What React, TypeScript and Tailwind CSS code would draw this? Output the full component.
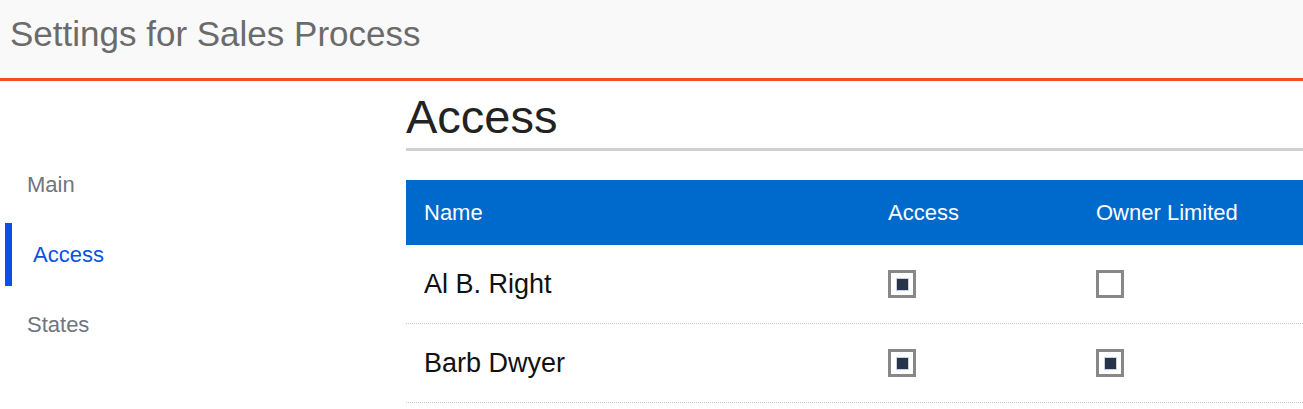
const nav = [
  { label: "Main", active: false },
  { label: "Access", active: true },
  { label: "States", active: false },
];

const users = [
  { name: "Al B. Right", access: true, ownerLimited: false },
  { name: "Barb Dwyer", access: true, ownerLimited: true },
];

function Check({ checked }: { checked: boolean }) {
  return (
    <div className="flex h-[28px] w-[28px] items-center justify-center border-[3px] border-[#888888] bg-white">
      {checked && (
        <div className="h-[13px] w-[13px] border border-[#c9d1dc] bg-[#28344a]" />
      )}
    </div>
  );
}

export default function App() {
  return (
    <div className="min-h-[409px] bg-white font-['Liberation_Sans',Arial,sans-serif]">
      <header className="flex h-[81px] items-center border-b-[3px] border-[#f04e26] bg-[#f9f9f9] px-[10px] pb-[12px]">
        <h1 className="text-[35px] leading-none text-[#6b6b6b]">
          Settings for Sales Process
        </h1>
      </header>
      <div className="flex">
        <aside className="w-[406px] shrink-0 pl-[5px] pt-[72px]">
          <nav className="flex flex-col gap-[7px]">
            {nav.map(({ label, active }) => (
              <div
                key={label}
                className={
                  active
                    ? "flex h-[63px] items-center border-l-[7px] border-[#0a50e6] pl-[21px] text-[22px] text-[#0a50e6]"
                    : "flex h-[63px] items-center pl-[22px] text-[22px] text-[#6f7480]"
                }
              >
                {label}
              </div>
            ))}
          </nav>
        </aside>
        <main className="min-w-0 flex-1 pt-[12px]">
          <h2 className="border-b-[3px] border-[#d0d0d0] pb-[8px] text-[47px] leading-none text-[#222222]">
            Access
          </h2>
          <div className="mt-[29px]">
            <div className="flex h-[65px] items-center bg-[#0069cc] text-[22px] text-white">
              <div className="w-[464px] pl-[18px]">Name</div>
              <div className="w-[208px] pl-[18px]">Access</div>
              <div className="flex-1 pl-[18px]">Owner Limited</div>
            </div>
            {users.map((u) => (
              <div
                key={u.name}
                className="flex h-[79px] items-center border-b border-dotted border-[#c8c8c8] text-[27px] text-[#111111]"
              >
                <div className="w-[464px] pl-[18px]">{u.name}</div>
                <div className="w-[208px] pl-[18px]">
                  <Check checked={u.access} />
                </div>
                <div className="flex-1 pl-[18px]">
                  <Check checked={u.ownerLimited} />
                </div>
              </div>
            ))}
          </div>
        </main>
      </div>
    </div>
  );
}
